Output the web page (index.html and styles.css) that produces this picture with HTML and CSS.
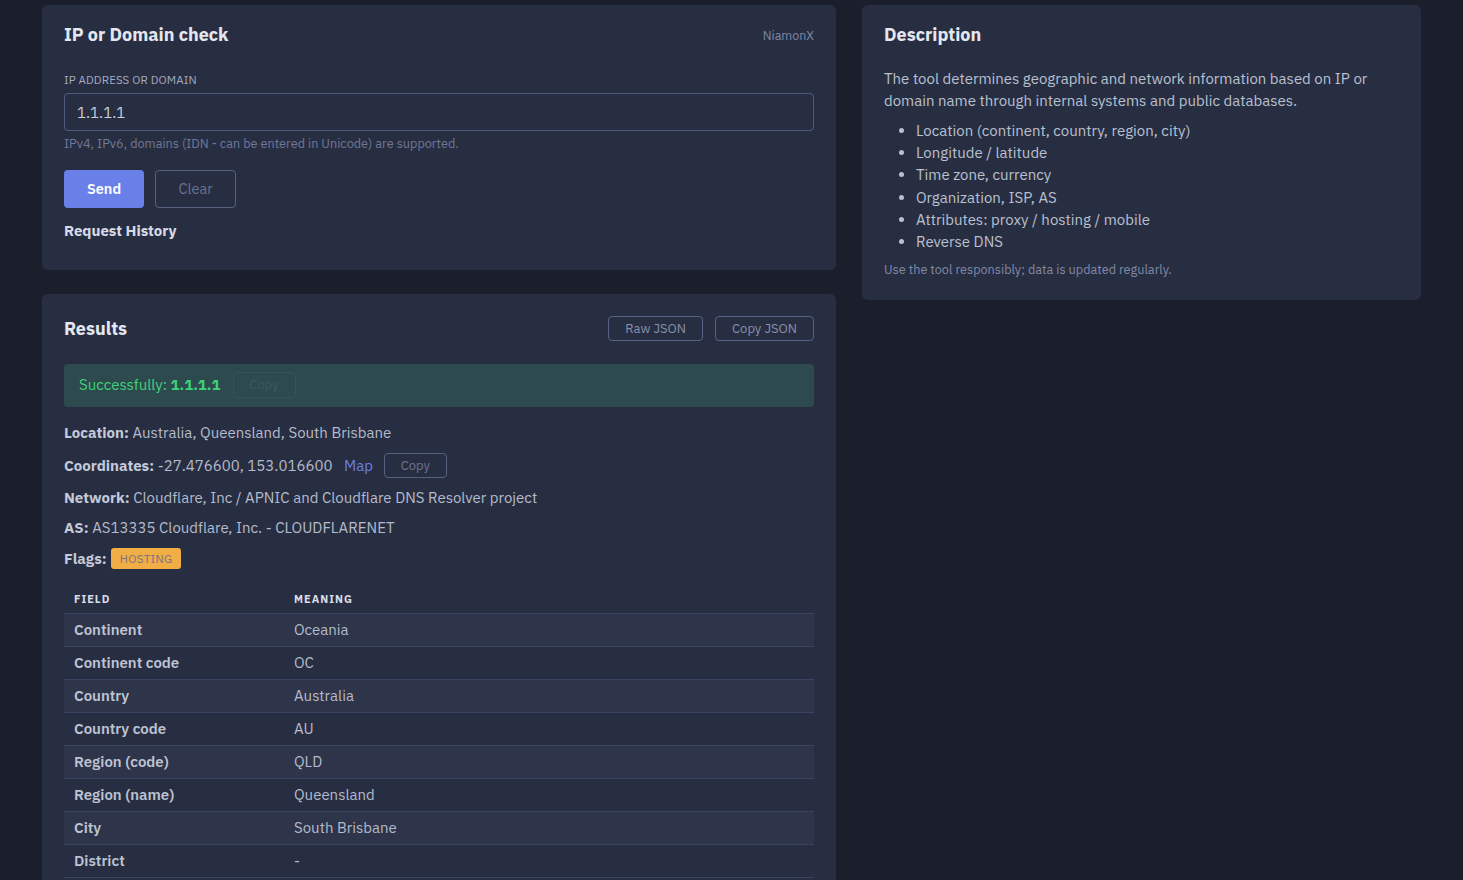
FILE: index.html
```html
<!DOCTYPE html>
<html lang="en">
<head>
<meta charset="utf-8">
<title>IP or Domain check</title>
<link rel="stylesheet" href="styles.css">
</head>
<body>
<main class="layout">
  <div class="col-main">
    <section class="card card-form">
      <header class="card-head">
        <h2 class="card-title">IP or Domain check</h2>
        <span class="brand">NiamonX</span>
      </header>
      <label class="field-label" for="query">IP address or domain</label>
      <input class="field-input" id="query" type="text" value="1.1.1.1">
      <p class="field-help">IPv4, IPv6, domains (IDN - can be entered in Unicode) are supported.</p>
      <div class="actions">
        <button class="btn btn-primary" type="button">Send</button>
        <button class="btn btn-outline" type="button">Clear</button>
      </div>
      <h3 class="history-title">Request History</h3>
    </section>

    <section class="card card-results">
      <header class="card-head results-head">
        <h2 class="card-title">Results</h2>
        <div class="head-tools">
          <button class="btn btn-small" type="button">Raw JSON</button>
          <button class="btn btn-small" type="button">Copy JSON</button>
        </div>
      </header>

      <div class="alert-success">
        <span>Successfully: <strong>1.1.1.1</strong></span>
        <button class="btn btn-ghost" type="button">Copy</button>
      </div>

      <div class="facts">
        <div class="fact"><b>Location:</b> Australia, Queensland, South Brisbane</div>
        <div class="fact fact-coords"><b>Coordinates:</b> -27.476600, 153.016600 <a class="map-link" href="#">Map</a> <button class="btn btn-copy" type="button">Copy</button></div>
        <div class="fact"><b>Network:</b> Cloudflare, Inc / APNIC and Cloudflare DNS Resolver project</div>
        <div class="fact"><b>AS:</b> AS13335 Cloudflare, Inc. - CLOUDFLARENET</div>
        <div class="fact fact-flags"><b>Flags:</b> <span class="badge">Hosting</span></div>
      </div>

      <table class="data-table">
        <thead>
          <tr><th class="col-field">Field</th><th>Meaning</th></tr>
        </thead>
        <tbody>
          <tr><td class="col-field">Continent</td><td>Oceania</td></tr>
          <tr><td class="col-field">Continent code</td><td>OC</td></tr>
          <tr><td class="col-field">Country</td><td>Australia</td></tr>
          <tr><td class="col-field">Country code</td><td>AU</td></tr>
          <tr><td class="col-field">Region (code)</td><td>QLD</td></tr>
          <tr><td class="col-field">Region (name)</td><td>Queensland</td></tr>
          <tr><td class="col-field">City</td><td>South Brisbane</td></tr>
          <tr><td class="col-field">District</td><td>-</td></tr>
        </tbody>
      </table>
    </section>
  </div>

  <aside class="col-side">
    <section class="card card-desc">
      <h2 class="card-title">Description</h2>
      <p class="desc-text">The tool determines geographic and network information based on IP or domain name through internal systems and public databases.</p>
      <ul class="desc-list">
        <li>Location (continent, country, region, city)</li>
        <li>Longitude / latitude</li>
        <li>Time zone, currency</li>
        <li>Organization, ISP, AS</li>
        <li>Attributes: proxy / hosting / mobile</li>
        <li>Reverse DNS</li>
      </ul>
      <p class="desc-note">Use the tool responsibly; data is updated regularly.</p>
    </section>
  </aside>
</main>
</body>
</html>
```

FILE: styles.css
```css
* { box-sizing: border-box; }

html, body {
  margin: 0;
  background: #1b1e2b;
}

body {
  font-family: "IBM Plex Sans", Roboto, "Liberation Sans", sans-serif;
  color: #bcc3d3;
  font-size: 15px;
  line-height: 20px;
  overflow: hidden;
  height: 880px;
}

.layout {
  display: grid;
  grid-template-columns: 794px 559px;
  column-gap: 26px;
  align-items: start;
  padding: 5px 42px 0;
}

.col-main {
  display: flex;
  flex-direction: column;
  gap: 24px;
}

.card {
  background: #282e42;
  border-radius: 6px;
  padding: 18px 22px 22px 22px;
}

.card-head {
  display: flex;
  justify-content: space-between;
  align-items: center;
}

.card-title {
  margin: 0;
  font-size: 18px;
  line-height: 24px;
  font-weight: 700;
  color: #e4e7ef;
}

.brand {
  font-size: 12.5px;
  color: #7d87a6;
}

/* search form */
.field-label {
  display: block;
  margin-top: 25px;
  font-size: 11.5px;
  line-height: 16px;
  text-transform: uppercase;
  color: #a3abc0;
  letter-spacing: 0.1px;
}

.field-input {
  display: block;
  width: 100%;
  height: 38px;
  margin-top: 5px;
  padding: 0 12px;
  background: #282e42;
  border: 1px solid #4f5a7e;
  border-radius: 4px;
  color: #c9cfdc;
  font: inherit;
  font-size: 15px;
  outline: none;
}

.field-help {
  margin: 4px 0 0;
  font-size: 12.7px;
  line-height: 16px;
  color: #6f7898;
}

.actions {
  display: flex;
  gap: 11px;
  margin-top: 19px;
}

.btn {
  font: inherit;
  cursor: pointer;
  border-radius: 4px;
  background: transparent;
}

.btn-primary {
  width: 80px;
  height: 38px;
  border: 0;
  background: #6a80e9;
  color: #ffffff;
  font-size: 14.5px;
  font-weight: 600;
}

.btn-outline {
  width: 81px;
  height: 38px;
  border: 1px solid #56617f;
  color: #69738f;
  font-size: 14.5px;
}

.history-title {
  margin: 13px 0 7px;
  font-size: 15px;
  line-height: 20px;
  font-weight: 700;
  color: #d6dae5;
}

/* results */
.card-results {
  padding-top: 22px;
  padding-bottom: 40px;
}

.head-tools {
  display: flex;
  gap: 12px;
}

.btn-small {
  height: 25px;
  padding: 0 16px;
  border: 1px solid #566384;
  color: #8690ab;
  font-size: 13px;
  line-height: 23px;
}

.alert-success {
  display: flex;
  align-items: center;
  gap: 12px;
  height: 43px;
  margin-top: 23px;
  padding: 0 15px 1px;
  background: #2d4a4e;
  border-radius: 4px;
  color: #3fd17a;
  font-size: 15px;
}

.alert-success strong { font-weight: 700; }

.btn-ghost {
  height: 26px;
  width: 63px;
  border: 1px solid #3a5256;
  color: #3d585c;
  font-size: 13px;
}

.facts {
  display: flex;
  flex-direction: column;
  gap: 10px;
  margin-top: 16px;
  font-size: 15px;
  color: #b4bbcc;
}

.fact {
  display: flex;
  align-items: center;
  white-space: pre;
}

.fact b {
  color: #c3c9d8;
  font-weight: 700;
}

.map-link {
  margin-left: 8px;
  color: #6b7fe6;
  text-decoration: none;
}

.btn-copy {
  height: 25px;
  width: 63px;
  margin-left: 11px;
  border: 1px solid #56617f;
  color: #6b7594;
  font-size: 13px;
}

.fact-flags { height: 21px; }

.badge {
  display: inline-block;
  margin-left: 4px;
  padding: 0 9px;
  height: 21px;
  line-height: 21px;
  background: #f0ae45;
  border-radius: 3px;
  color: #7a7284;
  font-size: 11.5px;
  text-transform: uppercase;
  letter-spacing: 0.4px;
}

.data-table {
  width: 100%;
  margin-top: 16px;
  border-collapse: collapse;
  font-size: 15px;
}

.data-table th {
  height: 28px;
  padding: 0 10px;
  text-align: left;
  font-size: 11px;
  font-weight: 700;
  text-transform: uppercase;
  letter-spacing: 1px;
  color: #d9dde8;
}

.data-table td {
  height: 33px;
  padding: 0 10px;
  border-top: 1px solid #3a4361;
  color: #b4bbcc;
}

.data-table tbody tr:last-child td {
  border-bottom: 1px solid #3a4361;
}

.data-table td.col-field {
  color: #bdc3d2;
  font-weight: 600;
}

.col-field { width: 220px; }

.data-table tbody tr:nth-child(odd) td {
  background: #2e3449;
}

/* description */
.card-desc {
  padding: 18px 22px 23px 22px;
}

.desc-text {
  margin: 21px 0 0;
  font-size: 15px;
  line-height: 22px;
  color: #b9c0d0;
}

.desc-list {
  margin: 8px 0 0;
  padding-left: 32px;
  font-size: 15px;
  line-height: 22.2px;
  color: #b9c0d0;
}

.desc-note {
  margin: 8px 0 0;
  font-size: 12.7px;
  line-height: 16px;
  color: #8089a6;
}
```
